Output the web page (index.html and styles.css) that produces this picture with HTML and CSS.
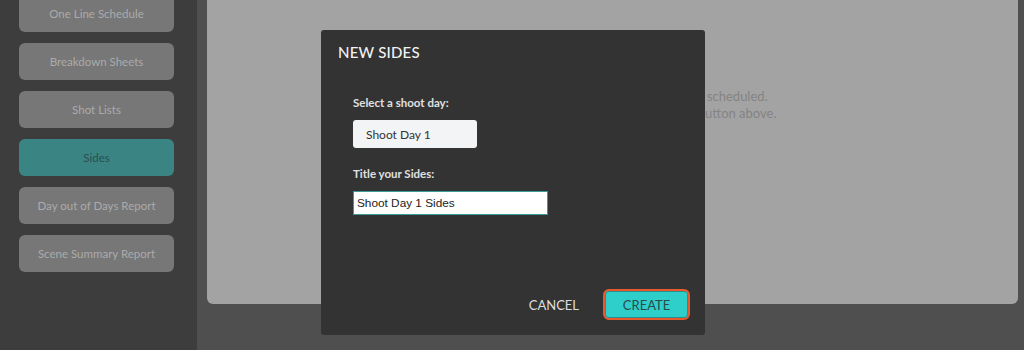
FILE: index.html
```html
<!doctype html>
<html lang="en">
<head>
    <meta charset="UTF-8">
    <title>Sides</title>
    <link rel="stylesheet" href="styles.css">
</head>
<body>
    <div class="sidebar">
        <div class="nav">
            <div class="nav-btn">One Line Schedule</div>
            <div class="nav-btn">Breakdown Sheets</div>
            <div class="nav-btn">Shot Lists</div>
            <div class="nav-btn active">Sides</div>
            <div class="nav-btn">Day out of Days Report</div>
            <div class="nav-btn">Scene Summary Report</div>
        </div>
    </div>

    <div class="main">
        <div class="card">
            <p class="empty">There are currently no sides that have been scheduled.<br>
            To create new sides, click on the New Sides button above.</p>
        </div>
    </div>

    <div class="modal">
        <h2>NEW SIDES</h2>
        <div class="modal-body">
            <label class="field-label">Select a shoot day:</label>
            <div class="select-box">Shoot Day 1</div>
            <label class="field-label">Title your Sides:</label>
            <input class="text-input" type="text" value="Shoot Day 1 Sides">
        </div>
        <div class="modal-footer">
            <span class="cancel">CANCEL</span>
            <span class="create">CREATE</span>
        </div>
    </div>
</body>
</html>
```

FILE: styles.css
```css
body {
    margin: 0;
    height: 350px;
    overflow: hidden;
    display: flex;
    background: #4f4f4f;
    font-family: Lato, "Open Sans", sans-serif;
}
.sidebar {
    width: 197px;
    height: 350px;
    background: #3d3d3d;
    flex-shrink: 0;
}
.nav {
    margin-top: -5px;
    padding-left: 19px;
    display: flex;
    flex-direction: column;
    gap: 11px;
}
.nav-btn {
    width: 155px;
    height: 37px;
    border-radius: 6px;
    background: #777777;
    color: #ababab;
    font-size: 11.5px;
    display: flex;
    align-items: center;
    justify-content: center;
}
.nav-btn.active {
    background: #3a8584;
    color: #2c4e4e;
}
.main {
    flex: 1;
    padding: 0 6px 0 10px;
}
.card {
    height: 310px;
    margin-top: -6px;
    background: #a3a3a3;
    border-radius: 6px;
    overflow: hidden;
}
.empty {
    margin: 94px 0 0;
    text-align: center;
    color: #848484;
    font-size: 13px;
    line-height: 17px;
}
.modal {
    position: absolute;
    left: 321px;
    top: 30px;
    width: 384px;
    height: 305px;
    background: #333333;
    border-radius: 3px;
    box-sizing: border-box;
    display: flex;
    flex-direction: column;
}
.modal h2 {
    margin: 0;
    padding: 13px 17px 0;
    color: #f2f2f2;
    font-size: 15px;
    font-weight: 500;
    line-height: 18px;
    letter-spacing: 0.2px;
}
.modal-body {
    padding: 35px 32px 0;
    display: flex;
    flex-direction: column;
    align-items: flex-start;
}
.field-label {
    color: #e0e0e0;
    font-size: 11.5px;
    font-weight: bold;
    line-height: 14px;
}
.select-box {
    margin: 10px 0 19px;
    width: 124px;
    height: 28px;
    box-sizing: border-box;
    padding-left: 13px;
    border-radius: 3px;
    background: #f3f4f5;
    color: #333;
    font-size: 12px;
    display: flex;
    align-items: center;
}
.text-input {
    margin-top: 10px;
    width: 195px;
    height: 24px;
    box-sizing: border-box;
    padding: 0 3px;
    border: 1px solid #3a9a98;
    background: #fff;
    color: #222;
    font-family: "Liberation Sans", Arial, sans-serif;
    font-size: 11.8px;
    outline: none;
}
.modal-footer {
    margin-top: auto;
    padding: 0 15px 15px;
    display: flex;
    justify-content: flex-end;
    align-items: center;
    gap: 24px;
}
.cancel {
    color: #dedede;
    font-size: 13px;
}
.create {
    width: 87px;
    height: 31px;
    box-sizing: border-box;
    border: 2px solid #e9592c;
    border-radius: 6px;
    background: #2ecfcb;
    box-shadow: inset 0 0 0 1px #2a8f8c;
    color: #2b4a4a;
    font-size: 13px;
    display: flex;
    align-items: center;
    justify-content: center;
}
```
